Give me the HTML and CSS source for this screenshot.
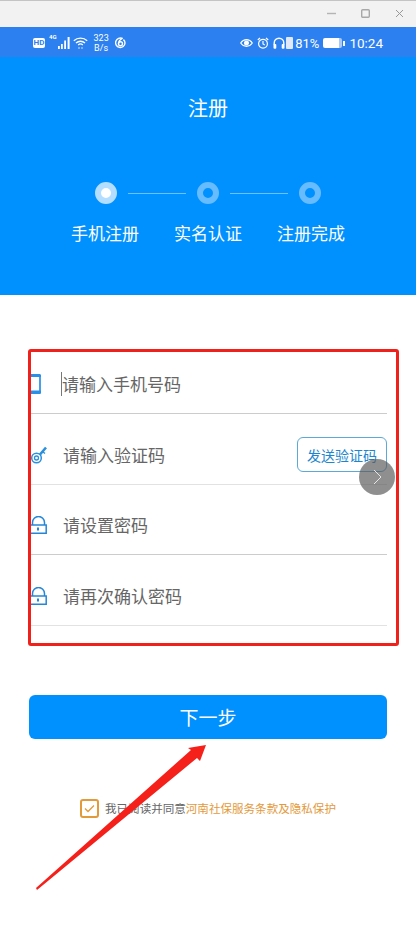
FILE: index.html
```html
<!DOCTYPE html>
<html>
<head>
  <meta charset="utf-8">
  <meta name="viewport" content="width=device-width,initial-scale=1">
  <title>注册</title>
  <link rel="stylesheet" href="styles.css">
</head>
<body>
  <div class="page">
    <div class="titlebar">
      <svg width="9" height="9" viewBox="0 0 9 9"><path d="M0 4.500h9" stroke="#b4b4b4" stroke-width="1.400"/></svg>
      <svg width="9" height="9" viewBox="0 0 9 9"><rect x=".7" y=".7" width="7.600" height="7.600" rx="1" fill="none" stroke="#a8a8a8" stroke-width="1.400"/></svg>
      <svg width="9" height="9" viewBox="0 0 9 9"><path d="M1 1l7 7M8 1l-7 7" stroke="#999" stroke-width="1"/></svg>
    </div>

    <div class="statusbar">
      <div class="status-left">
        <span class="hd">HD</span>
        <span class="net">4G</span>
        <svg width="12" height="12" viewBox="0 0 12 12" fill="#fff"><rect x="0" y="9" width="1.800" height="3"/><rect x="3" y="7" width="1.800" height="5"/><rect x="6.200" y="3.500" width="1.800" height="8.500"/><rect x="9.600" y="0" width="2" height="12"/></svg>
        <svg class="wifi" width="15" height="12" viewBox="0 0 15 12" fill="none" stroke="#fff" stroke-width="1.300"><path d="M.8 3.800a10 10 0 0 1 13.400 0M3 6a6.600 6.600 0 0 1 9 0M5.200 8a3.400 3.400 0 0 1 4.600 0"/><path d="M5.500 11h1M8.500 11h1" stroke-width="1.600"/></svg>
        <span class="speed">323<br>B/s</span>
        <svg class="swirl" width="11" height="12" viewBox="0 0 11 12" fill="none" stroke="#fff" stroke-width="1.400"><path d="M7.500 1.600A4.700 4.700 0 1 0 10 6a4.500 4.500 0 0 0-1.600-3.400"/><circle cx="5.500" cy="6.800" r="2"/><path d="M3.500 6.500C3.600 4 5 2.600 7.500 1"/></svg>
      </div>
      <div class="status-right">
        <svg width="13" height="10" viewBox="0 0 13 10" fill="none" stroke="#fff" stroke-width="1.200"><path d="M.7 5C3.600.6 9.400.6 12.300 5 9.400 9.400 3.600 9.400.7 5z"/><circle cx="6.500" cy="5" r="1.900" fill="#fff"/></svg>
        <svg class="alarm" width="12" height="12" viewBox="0 0 12 12" fill="none" stroke="#fff" stroke-width="1.200"><circle cx="6" cy="6.700" r="4.400"/><path d="M6 4v3l1.800 1M.8 3L3 1M11.200 3L9 1"/></svg>
        <svg class="headset" width="12" height="12" viewBox="0 0 12 12" fill="none" stroke="#fff"><path d="M1.200 8V6a4.800 4.800 0 0 1 9.600 0v2" stroke-width="1.400"/><rect x=".5" y="7" width="2.800" height="4.800" rx="1" fill="#fff" stroke="none"/><rect x="8.700" y="7" width="2.800" height="4.800" rx="1" fill="#fff" stroke="none"/></svg>
        <span class="bat-small"></span>
        <span class="percent">81%</span>
        <span class="battery"></span>
        <span class="clock">10:24</span>
      </div>
    </div>

    <header class="hero">
      <h1>注册</h1>
      <div class="steps">
        <span class="dot dot-active"></span>
        <span class="step-line"></span>
        <span class="dot"></span>
        <span class="step-line"></span>
        <span class="dot"></span>
      </div>
      <div class="step-labels">
        <span>手机注册</span>
        <span>实名认证</span>
        <span>注册完成</span>
      </div>
    </header>

    <section class="form">
      <div class="field">
        <span class="icon-slot icon-slot-phone">
          <svg width="11" height="20" viewBox="0 0 11 20" fill="none"><path d="M0 1h9a1 1 0 0 1 1 1v16a1 1 0 0 1-1 1H0" stroke="#2a8fe6" stroke-width="1.700"/><path d="M0 0h9.500a1.500 1.500 0 0 1 1.500 1.500V3H0zM0 16.500h11v2a1.500 1.500 0 0 1-1.500 1.500H0z" fill="#2a8fe6"/></svg>
        </span>
        <span class="cursor"></span>
        <span class="placeholder">请输入手机号码</span>
      </div>
      <div class="field">
        <span class="icon-slot">
          <svg width="19" height="19" viewBox="0 0 19 19" fill="none" stroke="#2a8fdc"><circle cx="6.500" cy="13" r="4.800" stroke-width="1.500"/><circle cx="6.500" cy="13" r="2" stroke-width="1.300"/><path d="M10 9.500L16 2.500" stroke-width="2.600"/><path d="M12.500 6.500l2.500 2" stroke-width="1.500"/></svg>
        </span>
        <span class="placeholder">请输入验证码</span>
        <button class="send-code">发送验证码</button>
      </div>
      <div class="field">
        <span class="icon-slot">
          <svg width="17" height="18" viewBox="0 0 17 18" fill="none" stroke="#2386d8" stroke-width="1.500"><path d="M2.500 9V6.500a6 6 0 0 1 12 0V9"/><path d="M0 9h16.200v8.200H0"/><path d="M8 11.500v3" stroke-width="2"/></svg>
        </span>
        <span class="placeholder">请设置密码</span>
      </div>
      <div class="field">
        <span class="icon-slot">
          <svg width="17" height="18" viewBox="0 0 17 18" fill="none" stroke="#2386d8" stroke-width="1.500"><path d="M2.500 9V6.500a6 6 0 0 1 12 0V9"/><path d="M0 9h16.200v8.200H0"/><path d="M8 11.500v3" stroke-width="2"/></svg>
        </span>
        <span class="placeholder">请再次确认密码</span>
      </div>
    </section>

    <button class="next">下一步</button>

    <div class="agree">
      <span class="checkbox">
        <svg width="11" height="9" viewBox="0 0 11 9" fill="none"><path d="M1 4.500l3 3 6-6" stroke="#e39a3b" stroke-width="1.300"/></svg>
      </span>
      <span>我已阅读并同意<span class="agree-link">河南社保服务条款及隐私保护</span></span>
    </div>

    <!-- annotations drawn on top of the screenshot -->
    <div class="red-box"></div>
    <div class="float-ball">
      <svg width="9" height="16" viewBox="0 0 9 16" fill="none"><path d="M1 1l7 7-7 7" stroke="#e6e6e6" stroke-width="1"/></svg>
    </div>
    <svg class="arrow" width="416" height="931" viewBox="0 0 416 931"><polygon points="36,888 191,750 188,748 206,745 200,761 197,758 37,890" fill="#f5201a"/></svg>
  </div>
</body>
</html>
```
FILE: styles.css
```css
html, body {
  margin: 0;
  padding: 0;
}

* {
  box-sizing: border-box;
}

body {
  background: #fff;
  color: #666;
  font-family: "Noto Sans CJK SC", "Liberation Sans", sans-serif;
}

.page {
  height: 931px;
  overflow: hidden;
  position: relative;
  width: 416px;
}

.titlebar {
  align-items: center;
  background: #f2f2f2;
  border-top: 1px solid #c4c4c4;
  display: flex;
  gap: 25px;
  height: 27px;
  justify-content: flex-end;
  padding: 0 12px 2px 0;
}

.statusbar {
  align-items: center;
  background: #2d80f0;
  color: #fff;
  display: flex;
  font-family: Roboto, sans-serif;
  height: 30px;
  justify-content: space-between;
  padding: 2px 33px 0;
}

.status-left,
.status-right {
  align-items: center;
  display: flex;
}

.hd {
  background: #fff;
  border-radius: 2px;
  color: #2d80f0;
  font-size: 8px;
  font-weight: 700;
  height: 10px;
  line-height: 10px;
  text-align: center;
  width: 12px;
}

.net {
  align-self: flex-start;
  font-size: 6px;
  font-weight: 700;
  line-height: 8px;
  margin: 0 1px 0 4px;
}

.wifi {
  margin-left: 3px;
}

.speed {
  font-size: 9px;
  line-height: 10px;
  margin-left: 6px;
  text-align: center;
  width: 15px;
}

.swirl {
  margin-left: 6px;
}

.alarm,
.headset {
  margin-left: 4px;
}

.bat-small {
  background: #dfe9fb;
  border-radius: 1px;
  height: 12px;
  margin-left: 1px;
  width: 7px;
}

.percent {
  font-size: 13px;
  margin-left: 2px;
}

.battery {
  background: linear-gradient(90deg, #fff 85%, #a9c9f7 85%);
  border-radius: 2px;
  height: 10px;
  margin-left: 4px;
  position: relative;
  width: 19px;
}

.battery::after {
  background: #fff;
  content: "";
  height: 5px;
  position: absolute;
  right: -3px;
  top: 2.500px;
  width: 2px;
}

.clock {
  font-size: 13.500px;
  margin-left: 7px;
}

.hero {
  background: #0091ff;
  color: #fff;
  height: 238px;
  padding-top: 37px;
}

h1 {
  font-size: 20px;
  font-weight: 400;
  line-height: 28px;
  margin: 0;
  text-align: center;
}

.steps {
  align-items: center;
  display: flex;
  gap: 11px;
  justify-content: center;
  margin-top: 60px;
}

.dot {
  background: #0091ff;
  border: 6px solid #66bcff;
  border-radius: 50%;
  height: 22px;
  width: 22px;
}

.dot-active {
  background: #fff;
  border-color: #b3deff;
}

.step-line {
  background: #6fc0ff;
  height: 1px;
  width: 58px;
}

.step-labels {
  display: flex;
  font-size: 17px;
  gap: 35px;
  justify-content: center;
  line-height: 24px;
  margin-top: 17px;
}

.form {
  margin-top: 48.300px;
  padding: 0 29px 0 30px;
}

.field {
  align-items: center;
  border-bottom: 1px solid #ccc;
  display: flex;
  height: 70.670px;
  padding-top: 12px;
}

.field:nth-child(even) {
  border-bottom-color: #e2e2e2;
}

.icon-slot {
  display: flex;
  flex: none;
  width: 33px;
}

.icon-slot-phone {
  width: 31px;
}

.placeholder {
  font-size: 17px;
  line-height: 24px;
}

.cursor {
  background: #777;
  flex: none;
  height: 24px;
  width: 1px;
}

.send-code {
  background: #fff;
  border: 1px solid #5aa9d6;
  border-radius: 6px;
  color: #1d86cf;
  font-family: inherit;
  font-size: 14px;
  height: 35px;
  margin-left: auto;
  padding: 0;
  width: 90px;
}

.next {
  background: #0091ff;
  border: 0;
  border-radius: 6px;
  color: #fff;
  display: block;
  font-family: inherit;
  font-size: 19px;
  height: 44px;
  margin: 69px 0 0 29px;
  padding: 0;
  width: 358px;
}

.agree {
  align-items: center;
  display: flex;
  font-size: 11.550px;
  gap: 6px;
  line-height: 18px;
  margin: 60px 0 0 80px;
}

.agree-link {
  color: #e39a3b;
}

.checkbox {
  align-items: center;
  border: 2px solid #e39a3b;
  border-radius: 3px;
  display: flex;
  height: 19px;
  justify-content: center;
  width: 19px;
}

.red-box {
  border: 3px solid #f0201a;
  border-radius: 3px;
  height: 297px;
  left: 28px;
  position: absolute;
  top: 349px;
  width: 371px;
}

.float-ball {
  align-items: center;
  background: rgba(90, 90, 90, .68);
  border-radius: 50%;
  display: flex;
  height: 36px;
  justify-content: center;
  left: 359px;
  position: absolute;
  top: 459px;
  width: 36px;
}

.arrow {
  left: 0;
  position: absolute;
  top: 0;
}
```
